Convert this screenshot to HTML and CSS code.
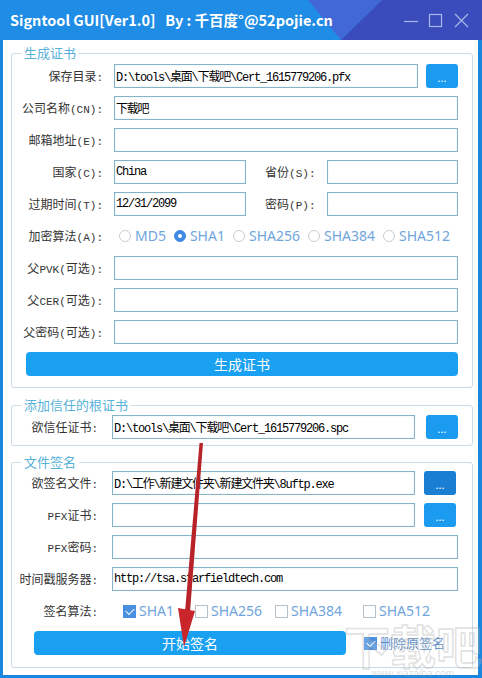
FILE: index.html
```html
<!doctype html>
<html lang="zh-CN">
<head>
    <meta charset="UTF-8">
    <title>Signtool GUI</title>
    <link rel="stylesheet" href="styles.css">
</head>
<body>
<div class="window">
    <div class="titlebar">
        <svg class="title-bg" viewBox="0 0 482 40" width="482" height="40">
            <polygon points="308,0 382,0 341,40" fill="#4267d7"/>
            <polygon points="382,0 482,0 482,40 341,40" fill="#3a4cbb"/>
        </svg>
        <span class="title">Signtool GUI[Ver1.0]   By : 千百度°@52pojie.cn</span>
        <svg class="controls" viewBox="400 0 72 40" width="72" height="40">
            <line x1="404" y1="21.5" x2="418" y2="21.5" stroke="#a9b8ea" stroke-width="1.2"/>
            <rect x="429.5" y="14.5" width="12" height="12" fill="none" stroke="#a9b8ea" stroke-width="1.2"/>
            <path d="M455 14 L468 27 M468 14 L455 27" stroke="#a9b8ea" stroke-width="1.2"/>
        </svg>
    </div>

    <div class="main">
        <fieldset class="group g-make">
            <legend>生成证书</legend>
            <div class="row">
                <label class="lbl">保存目录<span class="en">:</span></label>
                <input class="txt" type="text" value="D:\tools\桌面\下载吧\Cert_1615779206.pfx">
                <button class="browse">...</button>
            </div>
            <div class="row">
                <label class="lbl">公司名称<span class="en">(CN):</span></label>
                <input class="txt" type="text" value="下载吧">
            </div>
            <div class="row">
                <label class="lbl">邮箱地址<span class="en">(E):</span></label>
                <input class="txt" type="text" value="">
            </div>
            <div class="row">
                <label class="lbl">国家<span class="en">(C):</span></label>
                <input class="txt" type="text" value="China">
                <label class="lbl lbl2">省份<span class="en">(S):</span></label>
                <input class="txt" type="text" value="">
            </div>
            <div class="row">
                <label class="lbl">过期时间<span class="en">(T):</span></label>
                <input class="txt" type="text" value="12/31/2099">
                <label class="lbl lbl2">密码<span class="en">(P):</span></label>
                <input class="txt" type="text" value="">
            </div>
            <div class="row">
                <label class="lbl">加密算法<span class="en">(A):</span></label>
                <div class="opts">
                    <span class="opt"><i class="radio"></i>MD5</span>
                    <span class="opt"><i class="radio on"></i>SHA1</span>
                    <span class="opt"><i class="radio"></i>SHA256</span>
                    <span class="opt"><i class="radio"></i>SHA384</span>
                    <span class="opt"><i class="radio"></i>SHA512</span>
                </div>
            </div>
            <div class="row">
                <label class="lbl">父<span class="en">PVK(</span>可选<span class="en">):</span></label>
                <input class="txt" type="text" value="">
            </div>
            <div class="row">
                <label class="lbl">父<span class="en">CER(</span>可选<span class="en">):</span></label>
                <input class="txt" type="text" value="">
            </div>
            <div class="row">
                <label class="lbl">父密码<span class="en">(</span>可选<span class="en">):</span></label>
                <input class="txt" type="text" value="">
            </div>
            <div class="row">
                <button class="btn-main btn-make">生成证书</button>
            </div>
        </fieldset>

        <fieldset class="group g-trust">
            <legend>添加信任的根证书</legend>
            <div class="row">
                <label class="lbl">欲信任证书<span class="en">:</span></label>
                <input class="txt" type="text" value="D:\tools\桌面\下载吧\Cert_1615779206.spc">
                <button class="browse">...</button>
            </div>
        </fieldset>

        <fieldset class="group g-sign">
            <legend>文件签名</legend>
            <div class="row">
                <label class="lbl">欲签名文件<span class="en">:</span></label>
                <input class="txt" type="text" value="D:\工作\新建文件夹\新建文件夹\8uftp.exe">
                <button class="browse hover">...</button>
            </div>
            <div class="row">
                <label class="lbl"><span class="en">PFX</span>证书<span class="en">:</span></label>
                <input class="txt" type="text" value="">
                <button class="browse">...</button>
            </div>
            <div class="row">
                <label class="lbl"><span class="en">PFX</span>密码<span class="en">:</span></label>
                <input class="txt" type="text" value="">
            </div>
            <div class="row">
                <label class="lbl">时间戳服务器<span class="en">:</span></label>
                <input class="txt" type="text" value="http://tsa.starfieldtech.com">
            </div>
            <div class="row">
                <label class="lbl">签名算法<span class="en">:</span></label>
                <div class="checks">
                    <span class="opt"><i class="check on"></i>SHA1</span>
                    <span class="opt"><i class="check"></i>SHA256</span>
                    <span class="opt"><i class="check"></i>SHA384</span>
                    <span class="opt"><i class="check"></i>SHA512</span>
                </div>
            </div>
            <div class="row">
                <button class="btn-main btn-sign">开始签名</button>
                <span class="opt del"><i class="check on"></i>删除原签名</span>
            </div>
        </fieldset>
    </div>

    <div class="watermark">下载吧<small>www.xiazaiba.com</small></div>

    <svg class="arrow" viewBox="0 0 482 678" width="482" height="678">
        <polygon points="199.5,443 203,443 190,612 185,612" fill="#b8232a"/>
        <polygon points="178,608 195,611 184,647" fill="#c9262c"/>
    </svg>
</div>
</body>
</html>
```

FILE: styles.css
```css
* {
    margin: 0;
    padding: 0;
    box-sizing: border-box;
}
body {
    width: 482px;
    height: 678px;
    overflow: hidden;
    background: #fff;
    font: 12px/16px "Noto Sans CJK SC", sans-serif;
    color: #333;
}
.window {
    position: relative;
    width: 482px;
    height: 678px;
    overflow: hidden;
}
.titlebar {
    position: relative;
    height: 40px;
    background-color: #1f8de5;
    display: flex;
    align-items: center;
    padding-left: 10px;
}
.title-bg {
    position: absolute;
    left: 0;
    top: 0;
}
.title {
    position: relative;
    color: #fff;
    font: bold 14.5px/20px "Noto Sans CJK SC", sans-serif;
    white-space: pre;
}
.controls {
    position: relative;
    margin-left: auto;
    margin-right: 10px;
}
.main {
    height: 638px;
    border-style: solid;
    border-color: #1b86dd;
    border-width: 0 4px 3px 3px;
    padding-top: 5px;
}
.group {
    border: 1px solid #c8dbe6;
    border-radius: 3px;
    margin: 0 5px 0 8px;
    padding: 3px 14px 11px 0;
    min-width: 0;
}
.group legend {
    margin-left: 9px;
    padding: 0 3px;
    font-size: 13px;
    line-height: 16px;
    color: #58b2d8;
}
.g-trust {
    margin-top: 9px;
    padding-top: 2px;
    padding-bottom: 6px;
}
.g-sign {
    margin-top: 8px;
    padding-top: 1px;
    padding-bottom: 12px;
}
.row {
    display: flex;
    align-items: center;
    height: 24px;
}
.row + .row {
    margin-top: 8px;
}
.lbl {
    flex: none;
    width: 91px;
    margin-right: 11px;
    text-align: right;
    white-space: nowrap;
    color: #333;
}
.g-trust .lbl,
.g-sign .lbl {
    width: 86px;
    margin-right: 14px;
}
.lbl2 {
    width: 59px;
    margin-left: 11px;
}
.en {
    font: 11px "Liberation Mono", monospace;
}
.txt {
    flex: 1;
    min-width: 0;
    height: 24px;
    border: 1px solid #86b3c7;
    padding: 0 1px;
    outline: none;
    background: #fff;
    box-shadow: inset 0 0 2px #d9eef7;
    font: 12px "Liberation Mono", "Noto Sans CJK SC", monospace;
    letter-spacing: -1.2px;
    color: #000;
}
.browse {
    flex: none;
    width: 32px;
    height: 24px;
    margin-left: 8px;
    border: none;
    border-radius: 3px;
    background-color: #1b9bef;
    color: #fff;
    font: 11px/24px "Noto Sans", sans-serif;
    padding-top: 2px;
}
.g-trust .browse {
    margin-left: 11px;
}
.g-sign .browse {
    margin-left: 9px;
    margin-right: 2px;
}
.browse.hover {
    background-color: #1a7fd3;
}
.opts {
    display: flex;
    gap: 8px;
    padding-left: 5px;
}
.opt {
    display: flex;
    align-items: center;
    font: 14px/18px "Noto Sans", sans-serif;
    color: #6fa5db;
    white-space: nowrap;
}
.radio {
    width: 12px;
    height: 12px;
    margin-right: 4px;
    border: 1px solid #c8ced5;
    border-radius: 50%;
    position: relative;
}
.radio.on {
    background-color: #3f8ae2;
    border-color: #3f8ae2;
}
.radio.on:after {
    content: "";
    position: absolute;
    left: 3px;
    top: 3px;
    width: 4px;
    height: 4px;
    border-radius: 50%;
    background: #fff;
}
.checks {
    display: grid;
    grid-template-columns: 72px 80px 88px auto;
    padding-left: 11px;
}
.check {
    width: 13px;
    height: 13px;
    margin-right: 3px;
    border: 1px solid #b7c1ca;
    background: #fff;
    position: relative;
}
.check.on {
    background-color: #4a8fe0;
    border-color: #4a8fe0;
}
.check.on:after {
    content: "";
    position: absolute;
    left: 2px;
    top: 2px;
    width: 7px;
    height: 4px;
    border-left: 1.5px solid #fff;
    border-bottom: 1.5px solid #fff;
    transform: rotate(-45deg);
}
.btn-main {
    height: 24px;
    border: none;
    border-radius: 4px;
    background-color: #19a0f0;
    color: #fff;
    font: 14px/24px "Noto Sans CJK SC", sans-serif;
}
.btn-make {
    flex: 1;
    margin-left: 14px;
}
.btn-sign {
    width: 312px;
    margin-left: 22px;
}
.del {
    margin-left: 18px;
    font: 13px/18px "Noto Sans CJK SC", sans-serif;
    color: #5b8fcb;
}
.watermark {
    position: absolute;
    right: 0;
    bottom: -2px;
    width: 138px;
    text-align: center;
    font: bold 46px/48px "Noto Sans CJK SC", sans-serif;
    color: rgba(255, 255, 255, .2);
    -webkit-text-stroke: 1.5px rgba(150, 150, 150, .3);
    pointer-events: none;
}
.watermark small {
    display: block;
    font: 10px/12px "Liberation Sans", sans-serif;
    color: rgba(150, 150, 150, .35);
    -webkit-text-stroke: 0;
}
.arrow {
    position: absolute;
    left: 0;
    top: 0;
    pointer-events: none;
}
```
